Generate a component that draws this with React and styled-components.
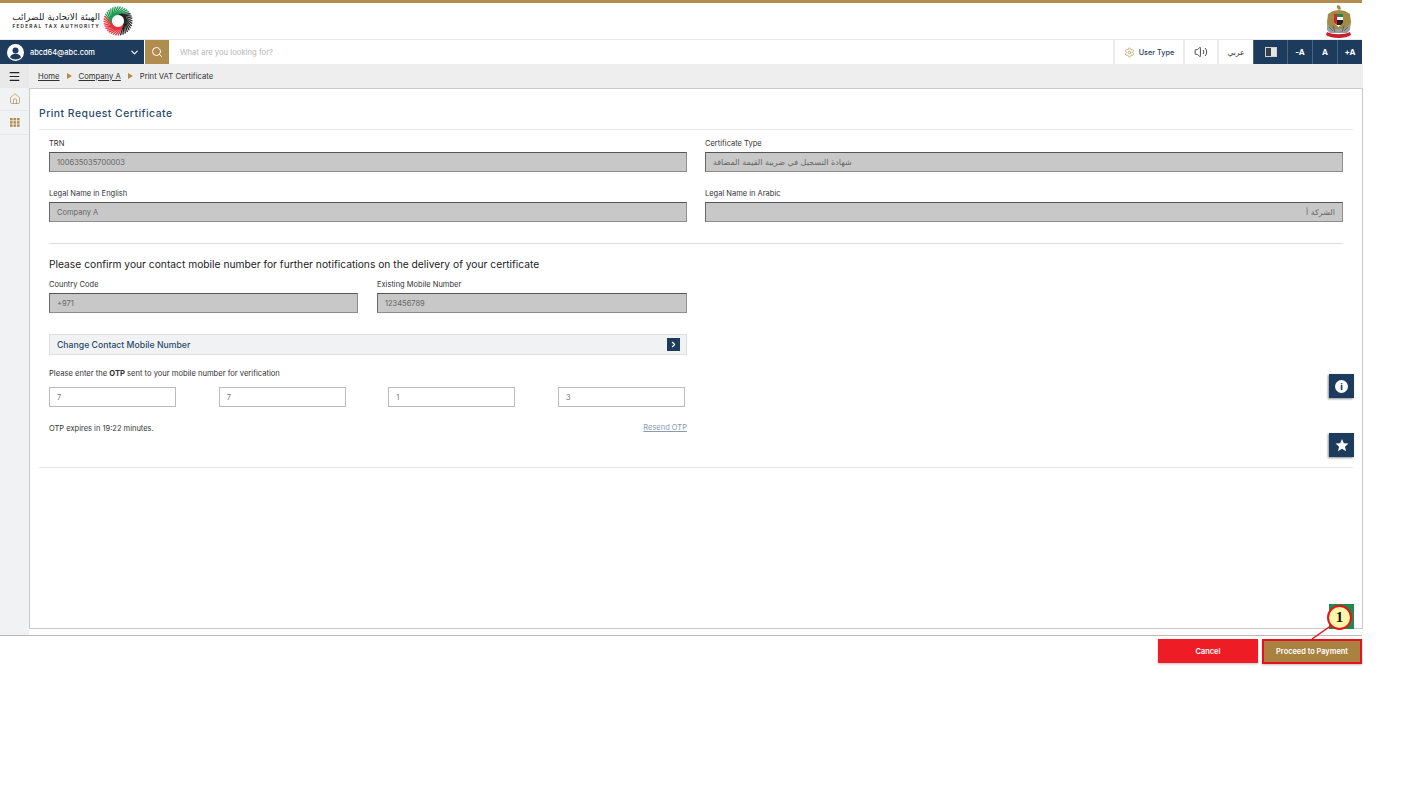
import React from 'react';
import styled, { createGlobalStyle } from 'styled-components';
import { Home, Search, ChevronDown, ChevronRight, Menu, Settings, Volume2 } from 'lucide-react';

const GlobalStyle = createGlobalStyle`
  html, body { margin: 0; padding: 0; background: #fff; }
  body { font-family: Inter, "DejaVu Sans", sans-serif; color: #333; }
  * { box-sizing: border-box; }
`;

const Page = styled.div`
  position: relative;
  width: 1362px;
  height: 801px;
  display: flex;
  flex-direction: column;
`;

const GoldBar = styled.div`
  height: 3px;
  background: #b08d4f;
`;

const Header = styled.header`
  height: 36px;
  display: flex;
  align-items: center;
  justify-content: space-between;
  padding: 0 10px 0 12px;
`;

const Brand = styled.div`
  display: flex;
  align-items: center;
  gap: 3px;
`;

const BrandText = styled.div`
  width: 88px;
  display: flex;
  flex-direction: column;
  align-items: flex-end;
  line-height: 1;
`;

const BrandArabic = styled.span`
  font-family: "DejaVu Sans", sans-serif;
  font-size: 9px;
  color: #222;
`;

const BrandLatin = styled.span`
  font-size: 4.8px;
  font-weight: 600;
  letter-spacing: 1.22px;
  margin-top: 2px;
  color: #222;
  white-space: nowrap;
`;

const Toolbar = styled.div`
  height: 25px;
  display: flex;
  border-top: 1px solid #e8e8e8;
`;

const UserBox = styled.div`
  width: 144px;
  display: flex;
  align-items: center;
  background: #1d3b5c;
  color: #fff;
  padding: 0 4px 0 7px;
`;

const Avatar = styled.svg`
  width: 17px;
  height: 17px;
  flex: none;
`;

const UserMail = styled.span`
  flex: 1;
  margin-left: 6px;
  font-size: 7.4px;
  font-weight: 500;
`;

const SearchButton = styled.div`
  width: 24px;
  margin-left: 1px;
  display: flex;
  align-items: center;
  justify-content: center;
  background: #b08d4f;
  color: #fff;
`;

const SearchField = styled.div`
  flex: 1;
  display: flex;
  align-items: center;
  padding-left: 11px;
  font-size: 7.7px;
  color: #b5b5b5;
`;

const ToolItem = styled.div`
  width: ${p => p.$w}px;
  display: flex;
  align-items: center;
  justify-content: center;
  gap: 4px;
  border-left: 2px solid #ececec;
  font-size: 7.3px;
  font-weight: 500;
  color: #2b4160;
`;

const ArabicToggle = styled(ToolItem)`
  font-family: "DejaVu Sans", sans-serif;
  font-size: 7.5px;
  font-weight: 400;
  color: #333;
`;

const DarkItem = styled.div`
  width: ${p => p.$w}px;
  display: flex;
  align-items: center;
  justify-content: center;
  background: #1d3b5c;
  border-left: 1px solid #4a6480;
  color: #fff;
  font-size: 8px;
  font-weight: 700;
`;

const ContrastIcon = styled.span`
  width: 12px;
  height: 10px;
  background: linear-gradient(90deg, #3a3f45 0 50%, #e4e4e4 50%);
  border: 1px solid #d0d0d0;
`;

const Body = styled.div`
  height: 572px;
  display: flex;
  border-bottom: 1px solid #b9b9b9;
`;

const Sidebar = styled.aside`
  width: 29px;
  flex: none;
  background: #f1f2f4;
`;

const SideCell = styled.div`
  height: ${p => p.$h}px;
  display: flex;
  align-items: center;
  justify-content: center;
  background: ${p => (p.$shade ? '#e9e9e9' : 'transparent')};
  border-bottom: ${p => (p.$shade ? 'none' : '1px solid #e6e6e6')};
  color: ${p => (p.$shade ? '#222' : '#b08d4f')};
`;

const Main = styled.main`
  flex: 1;
  display: flex;
  flex-direction: column;
`;

const Crumbs = styled.nav`
  height: 24px;
  background: #eee;
  display: flex;
  align-items: center;
  gap: 7px;
  padding-left: 9px;
  font-size: 7.7px;
  color: #333;
`;

const CrumbLink = styled.span`
  text-decoration: underline;
`;

const CrumbArrow = styled.span`
  width: 0;
  height: 0;
  border-left: 5px solid #b08d4f;
  border-top: 3px solid transparent;
  border-bottom: 3px solid transparent;
`;

const Panel = styled.section`
  position: relative;
  height: 541px;
  border: 1px solid #c9c9c9;
  background: #fff;
  padding: 0 9px;
`;

const PanelTitle = styled.h1`
  margin: 0;
  height: 41px;
  padding-top: 18px;
  font-size: 10.4px;
  line-height: 13px;
  font-weight: 500;
  letter-spacing: 0.48px;
  color: #2b4a6b;
  border-bottom: 1px solid #e6e6e6;
`;

const Form = styled.div`
  padding: 9px 10px 0;
  height: 338px;
  border-bottom: 1px solid #e6e6e6;
`;

const TwoCols = styled.div`
  display: grid;
  grid-template-columns: 638px 638px;
  column-gap: 18px;
  row-gap: 17px;
`;

const Field = styled.div`
  display: flex;
  flex-direction: column;
`;

const Label = styled.label`
  height: 10px;
  margin-bottom: 3px;
  font-size: 7.5px;
  line-height: 10px;
  color: #333;
`;

const ReadOnly = styled.div`
  height: 20px;
  display: flex;
  align-items: center;
  padding: 0 7px;
  background: #c8c8c8;
  border: 1px solid #8d8d8d;
  border-top: 1px solid #555;
  border-left: 1px solid #666;
  color: #666;
  direction: ${p => (p.$rtl ? 'rtl' : 'ltr')};
  font-family: ${p => (p.$arabic ? '"DejaVu Sans", sans-serif' : 'inherit')};
  font-size: ${p => (p.$arabic ? '8px' : '7.5px')};
`;

const Divider = styled.hr`
  margin: 21px 0 0;
  border: 0;
  border-top: 1px solid #dcdcdc;
`;

const Confirm = styled.h2`
  margin: 14px 0 0;
  font-size: 10.25px;
  line-height: 13px;
  font-weight: 400;
  color: #222;
`;

const MobileRow = styled.div`
  display: grid;
  grid-template-columns: 309px 310px;
  column-gap: 19px;
  margin-top: 9px;
  width: 638px;
`;

const ChangeBar = styled.div`
  width: 638px;
  height: 21px;
  margin-top: 21px;
  display: flex;
  align-items: center;
  justify-content: space-between;
  padding: 0 6px 0 7px;
  background: #f1f2f4;
  border: 1px solid #dfdfdf;
  font-size: 8.7px;
  font-weight: 500;
  color: #2b4a6b;
`;

const ChevronBox = styled.span`
  width: 13px;
  height: 13px;
  display: flex;
  align-items: center;
  justify-content: center;
  background: #1d3b5c;
  color: #fff;
`;

const OtpPrompt = styled.p`
  margin: 14px 0 0;
  font-size: 7.6px;
  line-height: 10px;
  color: #333;
`;

const OtpRow = styled.div`
  width: 636px;
  margin-top: 8px;
  display: flex;
  justify-content: space-between;
`;

const OtpBox = styled.div`
  width: 127px;
  height: 20px;
  display: flex;
  align-items: center;
  padding-left: 7px;
  border: 1px solid #bbb;
  font-size: 7.5px;
  color: #777;
`;

const OtpFoot = styled.div`
  width: 638px;
  margin-top: 17px;
  display: flex;
  justify-content: space-between;
  font-size: 7.5px;
  line-height: 10px;
  color: #333;
`;

const Resend = styled.span`
  color: #8a9bb0;
  text-decoration: underline;
  transform: translateY(-1px);
`;

const FloatButton = styled.div`
  position: absolute;
  right: 8px;
  top: ${p => p.$top}px;
  width: 25px;
  height: 24px;
  display: flex;
  align-items: center;
  justify-content: center;
  background: #1d3b5c;
  box-shadow: -1px 1px 2px rgba(0, 0, 0, 0.45);
  color: #fff;
`;

const InfoDot = styled.span`
  width: 13px;
  height: 13px;
  border-radius: 50%;
  background: #fff;
  color: #1d3b5c;
  display: flex;
  align-items: center;
  justify-content: center;
  font-size: 9px;
  font-weight: 800;
`;

const GreenTab = styled.div`
  position: absolute;
  right: 8px;
  top: 515px;
  width: 25px;
  height: 25px;
  background: #1f8a4c;
`;

const Footer = styled.footer`
  display: flex;
  justify-content: flex-end;
  align-items: flex-start;
  gap: 4px;
  padding-top: 3px;
`;

const ActionButton = styled.button`
  width: 100px;
  height: ${p => (p.$gold ? 25 : 24)}px;
  padding: 0;
  background: ${p => (p.$gold ? '#a98140' : '#ee1c25')};
  border: ${p => (p.$gold ? '2px solid #e8101c' : '0')};
  box-shadow: 0 1px 2px rgba(0, 0, 0, 0.25);
  color: #fff;
  font-family: inherit;
  font-size: 7.4px;
  font-weight: 600;
`;

const Callout = styled.div`
  position: absolute;
  left: 1327px;
  top: 605px;
  width: 25px;
  height: 25px;
  display: flex;
  align-items: center;
  justify-content: center;
  border-radius: 50%;
  background: #fdf7a8;
  border: 2px solid #e8101c;
  font-family: "Liberation Serif", serif;
  font-size: 15px;
  font-weight: 700;
  color: #111;
`;

const CalloutLine = styled.svg`
  position: absolute;
  left: 1310px;
  top: 624px;
  width: 24px;
  height: 16px;
`;

const stripeColor = mid => {
  const a = mid % 360;
  if (a >= 180 && a < 300) return '#1f9a52';
  if (a >= 300 || a < 60) return '#222';
  return '#e8303a';
};

// pinwheel ring of the FTA logo, stripes run from inner to outer radius with a twist
const LogoMark = () => {
  const stripes = [];
  for (let a = 0; a < 360; a += 10) {
    const a1 = (a * Math.PI) / 180;
    const a2 = ((a + 50) * Math.PI) / 180;
    stripes.push(
      <line
        key={a}
        x1={15 + 6.5 * Math.cos(a1)}
        y1={15 + 6.5 * Math.sin(a1)}
        x2={15 + 14.5 * Math.cos(a2)}
        y2={15 + 14.5 * Math.sin(a2)}
        stroke={stripeColor(a + 25)}
        strokeWidth="1.3"
      />
    );
  }
  return (
    <svg width="30" height="30" viewBox="0 0 30 30">
      {stripes}
    </svg>
  );
};

const Emblem = () => (
  <svg width="27" height="35" viewBox="0 0 27 35">
    <path d="M12 1l3 1 1 3-2 1 6 1 5 3 1 8-1 7-3 2H6l-3-2-1-7 1-8 5-3 6-1-2-2z" fill="#a08a45" />
    <path d="M2 20l6 5h11l6-5v6l-3 3H5l-3-3z" fill="#9a9d9e" />
    <path d="M4 23l4 4M8 22l2 6M19 22l-2 6M23 23l-4 4" stroke="#555" strokeWidth="0.8" />
    <path d="M9 10h9v9l-4.5 4-4.500-4z" fill="#fff" />
    <path d="M9 10h3v11l-3-2z" fill="#d8232a" />
    <path d="M12 10h6v3h-6z" fill="#1d8a4a" />
    <path d="M12 16h6v3l-2 2h-4z" fill="#222" />
    <path d="M2 28c6 3 17 3 23 0l1 3c-5 4-20 4-25 0z" fill="#c8202a" />
  </svg>
);

const App = () => (
  <Page>
    <GlobalStyle />
    <GoldBar />
    <Header>
      <Brand>
        <BrandText>
          <BrandArabic>الهيئة الاتحادية للضرائب</BrandArabic>
          <BrandLatin>FEDERAL TAX AUTHORITY</BrandLatin>
        </BrandText>
        <LogoMark />
      </Brand>
      <Emblem />
    </Header>
    <Toolbar>
      <UserBox>
        <Avatar viewBox="0 0 17 17">
          <circle cx="8.5" cy="8.5" r="8.5" fill="#fff" />
          <circle cx="8.5" cy="6.5" r="3" fill="#1d3b5c" />
          <path d="M3 13.5c1-3 3-3.700 5.500-3.700s4.500.7 5.500 3.700c-1.500 1.300-3.500 2-5.500 2s-4-.7-5.500-2z" fill="#1d3b5c" />
        </Avatar>
        <UserMail>abcd64@abc.com</UserMail>
        <ChevronDown size={11} strokeWidth={2.5} />
      </UserBox>
      <SearchButton>
        <Search size={12} />
      </SearchButton>
      <SearchField>What are you looking for?</SearchField>
      <ToolItem $w={70}>
        <Settings size={11} color="#b08d4f" strokeWidth={1.4} />
        User Type
      </ToolItem>
      <ToolItem $w={34}>
        <Volume2 size={14} color="#333" strokeWidth={1.5} />
      </ToolItem>
      <ArabicToggle $w={36}>عربي</ArabicToggle>
      <DarkItem $w={34}>
        <ContrastIcon />
      </DarkItem>
      <DarkItem $w={25}>-A</DarkItem>
      <DarkItem $w={25}>A</DarkItem>
      <DarkItem $w={25}>+A</DarkItem>
    </Toolbar>
    <Body>
      <Sidebar>
        <SideCell $h={24} $shade>
          <Menu size={13} strokeWidth={2.2} />
        </SideCell>
        <SideCell $h={23}>
          <Home size={12} strokeWidth={1.4} />
        </SideCell>
        <SideCell $h={24}>
          <svg width="10" height="9" viewBox="0 0 10 9" fill="#b08d4f">
            {[0, 3.5, 7].map(x =>
              [0, 3.2, 6.4].map(y => <rect key={`${x}-${y}`} x={x} y={y} width="2.6" height="2.4" />)
            )}
          </svg>
        </SideCell>
      </Sidebar>
      <Main>
        <Crumbs>
          <CrumbLink>Home</CrumbLink>
          <CrumbArrow />
          <CrumbLink>Company A</CrumbLink>
          <CrumbArrow />
          <span>Print VAT Certificate</span>
        </Crumbs>
        <Panel>
          <PanelTitle>Print Request Certificate</PanelTitle>
          <Form>
            <TwoCols>
              <Field>
                <Label>TRN</Label>
                <ReadOnly>100635035700003</ReadOnly>
              </Field>
              <Field>
                <Label>Certificate Type</Label>
                <ReadOnly $arabic>شهادة التسجيل في ضريبة القيمة المضافة</ReadOnly>
              </Field>
              <Field>
                <Label>Legal Name in English</Label>
                <ReadOnly>Company A</ReadOnly>
              </Field>
              <Field>
                <Label>Legal Name in Arabic</Label>
                <ReadOnly $arabic $rtl>الشركة أ</ReadOnly>
              </Field>
            </TwoCols>
            <Divider />
            <Confirm>Please confirm your contact mobile number for further notifications on the delivery of your certificate</Confirm>
            <MobileRow>
              <Field>
                <Label>Country Code</Label>
                <ReadOnly>+971</ReadOnly>
              </Field>
              <Field>
                <Label>Existing Mobile Number</Label>
                <ReadOnly>123456789</ReadOnly>
              </Field>
            </MobileRow>
            <ChangeBar>
              Change Contact Mobile Number
              <ChevronBox>
                <ChevronRight size={9} strokeWidth={3} />
              </ChevronBox>
            </ChangeBar>
            <OtpPrompt>
              Please enter the <b>OTP</b> sent to your mobile number for verification
            </OtpPrompt>
            <OtpRow>
              <OtpBox>7</OtpBox>
              <OtpBox>7</OtpBox>
              <OtpBox>1</OtpBox>
              <OtpBox>3</OtpBox>
            </OtpRow>
            <OtpFoot>
              <span>OTP expires in 19:22 minutes.</span>
              <Resend>Resend OTP</Resend>
            </OtpFoot>
          </Form>
          <FloatButton $top={285}>
            <InfoDot>i</InfoDot>
          </FloatButton>
          <FloatButton $top={344}>
            <svg width="14" height="14" viewBox="0 0 24 24" fill="#fff">
              <path d="M12 1.5l3.200 7.300 7.900.8-6 5.300 1.800 7.800-6.900-4.100-6.900 4.100 1.800-7.800-6-5.300 7.900-.8z" />
            </svg>
          </FloatButton>
          <GreenTab />
        </Panel>
      </Main>
    </Body>
    <Footer>
      <ActionButton>Cancel</ActionButton>
      <ActionButton $gold>Proceed to Payment</ActionButton>
    </Footer>
    <CalloutLine viewBox="0 0 24 16">
      <line x1="22" y1="1" x2="2" y2="15" stroke="#e8101c" strokeWidth="1.5" />
    </CalloutLine>
    <Callout>1</Callout>
  </Page>
);

export default App;
